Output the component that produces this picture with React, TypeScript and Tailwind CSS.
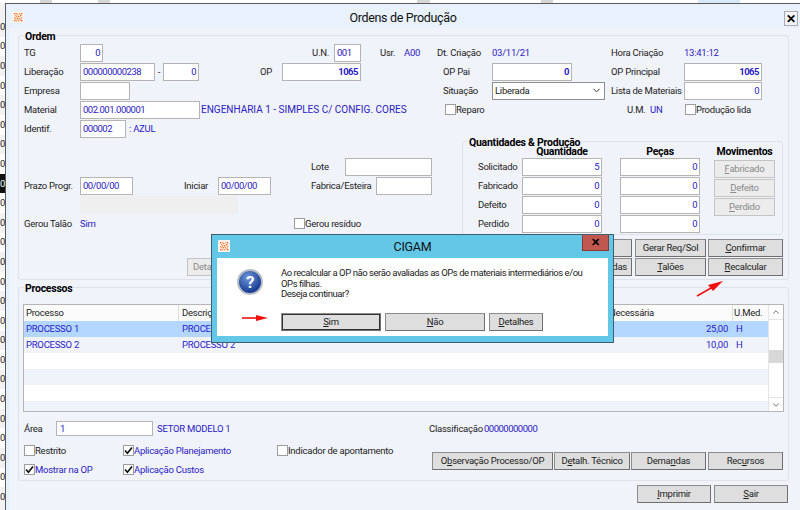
import React from "react";
import { ChevronDown, ChevronUp } from "lucide-react";

const Logo = () => (
  <svg width="12" height="12" viewBox="0 0 12 12" className="shrink-0 bg-[#fdf6f0]">
    {[
      [2, 2], [4, 2], [7, 2], [9, 2], [3, 4], [5, 3], [8, 4], [2, 6], [4, 5], [6, 5], [9, 6], [3, 7], [5, 7], [7, 7], [8, 8], [2, 9], [4, 9], [6, 9], [9, 9],
    ].map(([x, y], i) => (
      <rect key={i} x={x} y={y} width="1.4" height="1.4" fill={i % 3 === 0 ? "#f26a21" : "#f59a5c"} />
    ))}
  </svg>
);

const Check = ({ on = false }: { on?: boolean }) => (
  <span className="flex h-[11px] w-[11px] shrink-0 items-center justify-center border border-[#9c9c9c] bg-white">
    {on && (
      <svg width="9" height="9" viewBox="0 0 9 9">
        <path d="M1 4.5 L3.4 7.2 L8 1.5" fill="none" stroke="#111" strokeWidth="1.7" />
      </svg>
    )}
  </span>
);

const Input = ({ className = "", children, bold = false, left = false }: { className?: string; children?: React.ReactNode; bold?: boolean; left?: boolean }) => (
  <div className={`flex h-[18px] shrink-0 items-center border border-[#b4b4b4] bg-white px-[2px] tracking-[-0.5px] text-[#2a20c4] ${left ? "justify-start" : "justify-end"} ${bold ? "font-bold text-[#1c14a8]" : ""} ${className}`}>
    {children}
  </div>
);

const Btn = ({ className = "", children, disabled = false, focus = false }: { className?: string; children?: React.ReactNode; disabled?: boolean; focus?: boolean }) => (
  <div className={`flex h-[18px] shrink-0 items-center justify-center border bg-[#dedede] ${disabled ? "border-[#c4c4c4] bg-[#ececec] text-[#8a8a8a]" : "border-[#8d8d8d] border-b-[#6f6f6f] border-r-[#6f6f6f] text-[#222]"} ${focus ? "border-[#4f97cf] border-b-[#4f97cf] border-r-[#4f97cf]" : ""} ${className}`}>
    {children}
  </div>
);

const Row = ({ className = "", children }: { className?: string; children?: React.ReactNode }) => (
  <div className={`flex h-[19px] items-center whitespace-nowrap ${className}`}>{children}</div>
);

const Group = ({ title, className = "", children }: { title: string; className?: string; children?: React.ReactNode }) => (
  <div className={`relative rounded-[3px] border border-[#dfe2ea] ${className}`}>
    <span className="absolute left-[5px] top-[-4px] bg-[#f1f3fa] px-[1px] text-[10.5px] font-bold leading-[9px] text-black">{title}</span>
    {children}
  </div>
);

const Blue = ({ className = "", children }: { className?: string; children?: React.ReactNode }) => (
  <span className={`text-[#2a20c4] ${className}`}>{children}</span>
);

const stripRows = Array.from({ length: 25 }, (_, i) => i);

export default function App() {
  return (
    <div className="relative flex h-[510px] w-[800px] flex-col overflow-hidden bg-white font-['Roboto',sans-serif] text-[9.5px] leading-[12px] tracking-[-0.25px] text-[#222]">
      {/* desktop behind */}
      <div className="flex h-[3px] shrink-0 bg-white">
        <div className="ml-[40px] w-[12px] bg-[#d6d6d6]" />
        <div className="ml-[46px] w-[12px] bg-[#d6d6d6]" />
        <div className="ml-[307px] w-[13px] bg-[#d6d6d6]" />
        <div className="ml-[111px] w-[12px] bg-[#d6d6d6]" />
        <div className="ml-[145px] w-[42px] bg-[#d7e8f6]" />
      </div>
      <div className="flex min-h-0 flex-1">
        <div className="flex w-[5px] shrink-0 flex-col items-end overflow-hidden bg-[#f2f2f2] pt-[14px]">
          {stripRows.map((i) => (
            <div key={i} className={`flex h-[19.6px] w-full shrink-0 items-center justify-end overflow-hidden ${i === 8 ? "bg-[#111] text-white" : i % 2 ? "bg-white" : ""}`}>
              <span className="shrink-0">0</span>
            </div>
          ))}
        </div>

        {/* main window */}
        <div className="flex min-w-0 flex-1 flex-col border border-r-0 border-b-0 border-[#5b5b5b] bg-[#e8f1fc]">
          <div className="relative flex h-[24px] shrink-0 items-center justify-center pt-[4px] text-[12.5px] tracking-[-0.35px]">
            <span className="absolute left-[6px] top-[7px]"><Logo /></span>
            <span className="text-[#111]">Ordens de Produção</span>
            <span className="absolute right-[2px] top-[7px] flex h-[15px] w-[14px] items-center justify-center border border-[#a9a9b4] bg-[#f3f5fa] text-[12px] font-bold text-black">✕</span>
          </div>
          <div className="ml-[4px] flex min-h-0 flex-1 flex-col bg-[#f1f3fa] pl-[8px] pt-[7px]">
            {/* ORDEM */}
            <Group title="Ordem" className="h-[245px] w-[771px] shrink-0 pt-[7px]">
              <Row className="pl-[5px]">
                <span className="w-[56px]">TG</span>
                <Input className="w-[23px]">0</Input>
                <span className="ml-[209px] w-[22px]">U.N.</span>
                <Input left className="w-[27px]">001</Input>
                <span className="ml-[19px] w-[24px]">Usr.</span>
                <Blue className="w-[33px]">A00</Blue>
                <span className="w-[55px]">Dt. Criação</span>
                <Blue className="w-[119px]">03/11/21</Blue>
                <span className="w-[73px]">Hora Criação</span>
                <Blue>13:41:12</Blue>
              </Row>
              <Row className="pl-[5px]">
                <span className="w-[56px]">Liberação</span>
                <Input left className="w-[75px]">000000000238</Input>
                <span className="w-[8px] text-center">-</span>
                <Input className="w-[36px]">0</Input>
                <span className="ml-[61px] w-[22px]">OP</span>
                <Input bold className="w-[79px]">1065</Input>
                <span className="ml-[82px] w-[49px]">OP Pai</span>
                <Input bold className="w-[80px]">0</Input>
                <span className="ml-[39px] w-[73px]">OP Principal</span>
                <Input bold className="w-[78px]">1065</Input>
              </Row>
              <Row className="pl-[5px]">
                <span className="w-[56px]">Empresa</span>
                <Input className="w-[50px]" />
                <span className="ml-[313px] w-[49px]">Situação</span>
                <div className="flex h-[18px] w-[113px] shrink-0 items-center justify-between border border-[#8f8f8f] bg-white px-[2px] text-[#222]">
                  <span>Liberada</span>
                  <ChevronDown size={11} strokeWidth={2} />
                </div>
                <span className="ml-[6px] w-[73px]">Lista de Materiais</span>
                <Input className="w-[78px]">0</Input>
              </Row>
              <Row className="pl-[5px]">
                <span className="w-[56px]">Material</span>
                <Input left className="w-[120px]">002.001.000001</Input>
                <Blue className="ml-[1px] w-[244px] text-[10px] tracking-normal">ENGENHARIA 1 - SIMPLES C/ CONFIG. CORES</Blue>
                <div className="flex w-[182px] items-center"><Check /><span>Reparo</span></div>
                <span className="w-[23px]">U.M.</span>
                <Blue className="w-[35px]">UN</Blue>
                <Check /><span>Produção lida</span>
              </Row>
              <Row className="pl-[5px]">
                <span className="w-[56px]">Identif.</span>
                <Input left className="w-[46px]">000002</Input>
                <Blue className="ml-[3px]">: AZUL</Blue>
              </Row>

              <div className="flex">
                <div className="w-[443px] shrink-0 pt-[19px]">
                  <Row>
                    <span className="ml-[292px] w-[34px]">Lote</span>
                    <Input className="w-[87px]" />
                  </Row>
                  <Row className="pl-[5px]">
                    <span className="w-[56px]">Prazo Progr.</span>
                    <Input left className="w-[53px]">00/00/00</Input>
                    <span className="ml-[51px] w-[34px]">Iniciar</span>
                    <Input left className="w-[53px]">00/00/00</Input>
                    <span className="ml-[40px] w-[65px]">Fabrica/Esteira</span>
                    <Input className="w-[56px]" />
                  </Row>
                  <Row>
                    <div className="ml-[61px] h-[18px] w-[158px] bg-[#efefef]" />
                  </Row>
                  <Row className="pl-[5px]">
                    <span className="w-[56px]">Gerou Talão</span>
                    <Blue className="w-[214px]">Sim</Blue>
                    <Check /><span>Gerou resíduo</span>
                  </Row>
                </div>

                <Group title="Quantidades & Produção" className="mt-[3px] flex h-[94px] w-[321px] shrink-0 pl-[15px]">
                  <div>
                    <div className="flex h-[15px] items-end pb-[1px] pl-[44px] text-[10.5px] font-bold leading-[9px] text-black">
                      <span className="w-[80px] text-center">Quantidade</span>
                      <span className="ml-[18px] w-[80px] text-center">Peças</span>
                    </div>
                    {[
                      ["Solicitado", "5"],
                      ["Fabricado", "0"],
                      ["Defeito", "0"],
                      ["Perdido", "0"],
                    ].map(([l, v]) => (
                      <Row key={l}>
                        <span className="w-[44px]">{l}</span>
                        <Input className="w-[80px]">{v}</Input>
                        <Input className="ml-[18px] w-[80px]">0</Input>
                      </Row>
                    ))}
                  </div>
                  <div className="ml-[14px] flex w-[61px] flex-col items-center">
                    <div className="flex h-[15px] items-end whitespace-nowrap pb-[1px] text-[10.5px] font-bold leading-[9px] text-black">Movimentos</div>
                    <div className="mt-[3px] flex flex-col gap-[1px]">
                      <Btn disabled className="w-[61px]"><span><u>F</u>abricado</span></Btn>
                      <Btn disabled className="w-[61px]"><span><u>D</u>efeito</span></Btn>
                      <Btn disabled className="w-[61px]"><span><u>P</u>erdido</span></Btn>
                    </div>
                  </div>
                </Group>
              </div>

              <div className="mt-[4px] flex justify-end gap-[2px] pr-[5px]">
                <Btn className="mr-[1px] w-[62px]" />
                <Btn className="w-[71px]">Gerar Req/Sol</Btn>
                <Btn className="w-[75px]"><span><u>C</u>onfirmar</span></Btn>
              </div>
              <div className="mt-[1px] flex gap-[2px] pl-[168px]">
                <Btn disabled className="w-[73px] !justify-start pl-[5px]">Detalhes</Btn>
                <Btn className="ml-[308px] mr-[1px] w-[62px] !justify-end pr-[4px]">Geradas</Btn>
                <Btn className="w-[71px]"><span><u>T</u>alões</span></Btn>
                <Btn focus className="w-[75px]"><span><u>R</u>ecalcular</span></Btn>
              </div>
            </Group>

            {/* PROCESSOS */}
            <Group title="Processos" className="mt-[7px] h-[194px] w-[771px] shrink-0 pt-[16px]">
              <div className="ml-[4px] flex h-[108px] w-[761px] border border-[#b5b5b5] bg-white">
                <div className="min-w-0 flex-1 overflow-hidden">
                  <div className="flex h-[16px] bg-[#fbfbfb]">
                    <span className="w-[155px] border-r border-[#dedede] pl-[2px] leading-[16px]">Processo</span>
                    <span className="w-[427px] border-r border-[#dedede] pl-[3px] leading-[16px]">Descrição</span>
                    <span className="w-[127px] border-r border-[#dedede] pl-[3px] leading-[16px]">Necessária</span>
                    <span className="pl-[1px] leading-[16px]">U.Med.</span>
                  </div>
                  {[
                    ["PROCESSO 1", "25,00", "H", "bg-[#b3d7ff]"],
                    ["PROCESSO 2", "10,00", "H", "bg-[#f1f3fa]"],
                    ["", "", "", "bg-white"],
                    ["", "", "", "bg-[#f1f3fa]"],
                    ["", "", "", "bg-white"],
                    ["", "", "", "bg-[#f1f3fa]"],
                  ].map(([p, q, u, bg], i) => (
                    <div key={i} className={`flex h-[16px] leading-[16px] text-[#2a20c4] ${bg}`}>
                      <span className="w-[155px] pl-[2px]">{p}</span>
                      <span className="w-[427px] pl-[3px]">{p}</span>
                      <span className="w-[127px] pr-[5px] text-right">{q}</span>
                      <span className="pl-[3px]">{u}</span>
                    </div>
                  ))}
                </div>
                <div className="flex w-[15px] shrink-0 flex-col border-l border-[#e4e4e4] bg-white">
                  <div className="flex h-[15px] items-center justify-center border-b border-[#e4e4e4]"><ChevronUp size={10} color="#555" /></div>
                  <div className="mt-[30px] h-[13px] bg-[#d8d8d8]" />
                  <div className="mt-auto flex h-[14px] items-center justify-center border-t border-[#e4e4e4]"><ChevronDown size={10} color="#555" /></div>
                </div>
              </div>

              <div className="mt-[9px] flex h-[15px] items-center whitespace-nowrap pl-[5px]">
                <span className="w-[32px]">Área</span>
                <div className="flex h-[15px] w-[97px] items-center border border-[#b4b4b4] bg-white px-[3px] text-[#2a20c4]">1</div>
                <Blue className="ml-[4px] w-[272px]">SETOR MODELO 1</Blue>
                <span className="w-[55px]">Classificação</span>
                <Blue className="tracking-[-0.5px]">00000000000</Blue>
              </div>

              <div className="mt-[5px] flex whitespace-nowrap">
                <div className="w-[413px] shrink-0 pl-[5px]">
                  <Row>
                    <div className="flex w-[99px] items-center"><Check /><span>Restrito</span></div>
                    <div className="flex w-[154px] items-center"><Check on /><Blue>Aplicação Planejamento</Blue></div>
                    <Check /><span>Indicador de apontamento</span>
                  </Row>
                  <Row>
                    <div className="flex w-[99px] items-center"><Check on /><Blue>Mostrar na OP</Blue></div>
                    <div className="flex w-[154px] items-center"><Check on /><Blue>Aplicação Custos</Blue></div>
                  </Row>
                </div>
                <div className="mt-[11px] flex gap-[1px]">
                  <Btn className="w-[121px]"><span>O<u>b</u>servação Processo/OP</span></Btn>
                  <Btn className="w-[76px]"><span>D<u>e</u>talh. Técnico</span></Btn>
                  <Btn className="w-[75px]"><span>Dema<u>n</u>das</span></Btn>
                  <Btn className="ml-[1px] w-[75px]"><span>Rec<u>u</u>rsos</span></Btn>
                </div>
              </div>
            </Group>

            <div className="mt-[4px] flex w-[770px] justify-end gap-[3px]">
              <Btn className="w-[74px]"><span><u>I</u>mprimir</span></Btn>
              <Btn className="w-[74px]"><span><u>S</u>air</span></Btn>
            </div>
          </div>
        </div>
      </div>

      {/* CIGAM dialog */}
      <div className="absolute left-[211px] top-[234px] flex h-[109px] w-[403px] flex-col border border-[#3f5f70] bg-[#63c8e8]">
        <div className="relative flex h-[23px] shrink-0 items-center justify-center text-[12.5px] text-[#111]">
          <span className="absolute left-[6px] top-[5px]"><Logo /></span>
          <span>CIGAM</span>
          <span className="absolute right-[4px] top-0 flex h-[16px] w-[27px] items-center justify-center border border-t-0 border-[#8a3a33] bg-[#c0584f] text-[11px] font-bold text-black">✕</span>
        </div>
        <div className="mx-[5px] flex h-[78px] bg-white text-[#222]">
          <div className="ml-[20px] mt-[11px] flex h-[26px] w-[26px] shrink-0 items-center justify-center rounded-full border-2 border-[#b9bdc6] bg-[radial-gradient(circle_at_40%_30%,#6f96dc,#1a3f94_70%)] text-[17px] font-bold leading-none text-white">?</div>
          <div className="ml-[18px] flex flex-col pt-[10px]">
            <p className="whitespace-nowrap leading-[10.5px] tracking-[-0.45px]">Ao recalcular a OP não serão avaliadas as OPs de materiais intermediários e/ou<br />OPs filhas.<br />Deseja continuar?</p>
            <div className="mt-[13px] flex gap-[4px]">
              <Btn focus className="h-[15px] w-[100px] outline outline-1 -outline-offset-2 outline-[#333]"><span><u>S</u>im</span></Btn>
              <Btn className="h-[15px] w-[100px]"><span><u>N</u>ão</span></Btn>
              <Btn className="h-[15px] w-[54px]"><span><u>D</u>etalhes</span></Btn>
            </div>
          </div>
        </div>
      </div>

      {/* annotation arrows */}
      <svg className="absolute left-[240px] top-[312px]" width="30" height="12" viewBox="0 0 30 12">
        <path d="M2 6 H18" stroke="#f01010" strokeWidth="1.6" />
        <path d="M16 3 L28 6 L16 9 Z" fill="#f01010" />
      </svg>
      <svg className="absolute left-[694px] top-[278px]" width="32" height="20" viewBox="0 0 32 20">
        <path d="M3 18 L17 10" stroke="#f01010" strokeWidth="1.6" />
        <path d="M14 7 L29 3 L19 13 Z" fill="#f01010" />
      </svg>
    </div>
  );
}
